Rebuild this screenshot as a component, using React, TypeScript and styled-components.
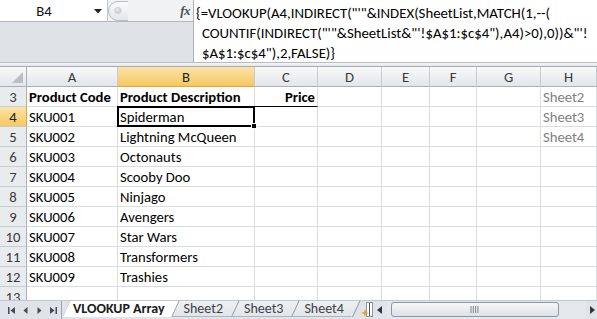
import styled, { createGlobalStyle, css } from "styled-components";

const GlobalStyle = createGlobalStyle`
  html, body {
    margin: 0;
    padding: 0;
  }
  body {
    background: #fff;
    font-family: Calibri, Carlito, "Liberation Sans", Arial, sans-serif;
    overflow: hidden;
  }
  * {
    box-sizing: border-box;
  }
`;

const COLS = ["A", "B", "C", "D", "E", "F", "G", "H"];
const COL_WIDTHS = [91, 137, 63, 64, 48, 47, 64, 56];

const FORMULA = [
  `{=VLOOKUP(A4,INDIRECT("'"&INDEX(SheetList,MATCH(1,--(`,
  `COUNTIF(INDIRECT("'"&SheetList&"'!$A$1:$c$4"),A4)>0),0))&"'!`,
  `$A$1:$c$4"),2,FALSE)}`,
];

type CellData = {
  text?: string;
  bold?: boolean;
  right?: boolean;
  muted?: boolean;
  underline?: boolean;
};

const products = [
  ["SKU001", "Spiderman"],
  ["SKU002", "Lightning McQueen"],
  ["SKU003", "Octonauts"],
  ["SKU004", "Scooby Doo"],
  ["SKU005", "Ninjago"],
  ["SKU006", "Avengers"],
  ["SKU007", "Star Wars"],
  ["SKU008", "Transformers"],
  ["SKU009", "Trashies"],
];

const sheetNames = ["Sheet2", "Sheet3", "Sheet4"];

const empty = (): CellData[] => COLS.map(() => ({}));

const rows: { num: number; cells: CellData[] }[] = [
  {
    num: 3,
    cells: [
      { text: "Product Code", bold: true },
      { text: "Product Description", bold: true },
      { text: "Price", bold: true, right: true, underline: true },
      {},
      {},
      {},
      {},
      { text: sheetNames[0], muted: true },
    ],
  },
  ...products.map(([sku, name], i) => {
    const cells = empty();
    cells[0] = { text: sku };
    cells[1] = { text: name };
    if (sheetNames[i + 1]) cells[7] = { text: sheetNames[i + 1], muted: true };
    return { num: i + 4, cells };
  }),
  { num: 13, cells: empty() },
];

const selected = { row: 4, col: 1 };

const tabs = ["VLOOKUP Array", "Sheet2", "Sheet3", "Sheet4"];

const NavIcon = ({ kind }: { kind: "first" | "prev" | "next" | "last" }) => (
  <svg width="9" height="9" viewBox="0 0 9 9">
    {kind === "first" && (
      <>
        <rect x="1" y="1" width="1.5" height="7" fill="#444d57" />
        <polygon points="8,1 8,8 3.5,4.5" fill="#444d57" />
      </>
    )}
    {kind === "prev" && <polygon points="6.5,1 6.5,8 2.5,4.5" fill="#444d57" />}
    {kind === "next" && <polygon points="2.5,1 2.5,8 6.5,4.5" fill="#444d57" />}
    {kind === "last" && (
      <>
        <polygon points="1,1 1,8 5.5,4.5" fill="#444d57" />
        <rect x="6.5" y="1" width="1.5" height="7" fill="#444d57" />
      </>
    )}
  </svg>
);

const App = () => {
  return (
    <>
      <GlobalStyle />
      <Window>
        <FormulaBar>
          <NameColumn>
            <NameBox>
              <NameText>B4</NameText>
              <DropArrow>
                <svg width="8" height="5" viewBox="0 0 8 5">
                  <polygon points="0,0 8,0 4,4.5" fill="#222" />
                </svg>
              </DropArrow>
            </NameBox>
          </NameColumn>
          <FxColumn>
            <FxStrip>
              <svg width="20" height="21" viewBox="0 0 20 21">
                <defs>
                  <linearGradient id="grip" x1="0" y1="0" x2="0" y2="1">
                    <stop offset="0" stopColor="#fbfbfc" />
                    <stop offset="1" stopColor="#e3e6ea" />
                  </linearGradient>
                </defs>
                <path
                  d="M20 1.5 H10 A9.5 9.5 0 0 0 10 20.5 H20"
                  fill="url(#grip)"
                  stroke="#b6bcc4"
                />
                <circle cx="10" cy="10.5" r="3.6" fill="#cdd2d8" />
                <circle cx="9.4" cy="9.8" r="1.8" fill="#e6e9ec" />
              </svg>
              <Fx>fx</Fx>
            </FxStrip>
          </FxColumn>
          <FormulaBox>
            {FORMULA.map((line, i) => (
              <FormulaLine key={i} $indent={i > 0}>
                {line}
              </FormulaLine>
            ))}
          </FormulaBox>
        </FormulaBar>
        <Divider />
        <Sheet>
          <Corner>
            <svg width="11" height="11" viewBox="0 0 11 11">
              <polygon points="11,0 11,11 0,11" fill="#b9bfc6" />
            </svg>
          </Corner>
          {COLS.map((c, i) => (
            <HeaderCell key={c} $selected={i === selected.col}>
              {c}
            </HeaderCell>
          ))}
          {rows.map((r) => (
            <RowGroup key={r.num}>
              <RowHeader $selected={r.num === selected.row}>{r.num}</RowHeader>
              {r.cells.map((cell, ci) => {
                const isSel = r.num === selected.row && ci === selected.col;
                return (
                  <Cell
                    key={ci}
                    $bold={cell.bold}
                    $right={cell.right}
                    $muted={cell.muted}
                    $underline={cell.underline}
                    $selected={isSel}
                  >
                    {cell.text}
                    {isSel && (
                      <>
                        <Selection />
                        <FillHandle />
                      </>
                    )}
                  </Cell>
                );
              })}
            </RowGroup>
          ))}
        </Sheet>
        <TabBar>
          <NavGroup>
            <NavButton>
              <NavIcon kind="first" />
            </NavButton>
            <NavButton>
              <NavIcon kind="prev" />
            </NavButton>
            <NavButton>
              <NavIcon kind="next" />
            </NavButton>
            <NavButton>
              <NavIcon kind="last" />
            </NavButton>
          </NavGroup>
          <Tabs>
            {tabs.map((t, i) => (
              <SheetTab key={t} $active={i === 0}>
                {t}
              </SheetTab>
            ))}
            <InsertTab>
              <svg width="8" height="8" viewBox="0 0 8 8">
                <polygon
                  points="4,0 5,3 8,4 5,5 4,8 3,5 0,4 3,3"
                  fill="#f0a12c"
                />
              </svg>
            </InsertTab>
          </Tabs>
          <SplitBox />
          <ScrollArrow>
            <svg width="5" height="8" viewBox="0 0 5 8">
              <polygon points="5,0 5,8 0,4" fill="#2f363d" />
            </svg>
          </ScrollArrow>
          <Track>
            <Thumb>
              <svg width="9" height="7" viewBox="0 0 9 7">
                {[0.5, 2.8, 5.1, 7.4].map((x) => (
                  <rect key={x} x={x} y="0" width="1" height="7" fill="#7d8690" />
                ))}
              </svg>
            </Thumb>
          </Track>
          <ScrollArrow>
            <svg width="5" height="8" viewBox="0 0 5 8">
              <polygon points="0,0 0,8 5,4" fill="#2f363d" />
            </svg>
          </ScrollArrow>
        </TabBar>
      </Window>
    </>
  );
};

export default App;

const Window = styled.div`
  width: 597px;
  height: 319px;
  display: flex;
  flex-direction: column;
  overflow: hidden;
`;

const FormulaBar = styled.div`
  display: grid;
  grid-template-columns: 108px 85px 1fr;
  height: 63px;
  flex: 0 0 63px;
  background: #dfe2e7;
  border-bottom: 1px solid #b7bdc5;
`;

const NameColumn = styled.div`
  display: flex;
  flex-direction: column;
`;

const NameBox = styled.div`
  height: 22px;
  display: flex;
  align-items: center;
  background: #fff;
  border-right: 1px solid #c3c8ce;
  border-bottom: 1px solid #b3b9c1;
  font-size: 14.67px;
  color: #111;
`;

const NameText = styled.span`
  flex: 1;
  text-align: center;
`;

const DropArrow = styled.span`
  width: 19px;
  display: flex;
  justify-content: center;
  padding-top: 1px;
`;

const FxColumn = styled.div`
  display: flex;
  flex-direction: column;
`;

const FxStrip = styled.div`
  height: 22px;
  display: flex;
  align-items: center;
  background: #f1f2f4;
  border-bottom: 1px solid #b3b9c1;
`;

const Fx = styled.span`
  margin-left: auto;
  padding-right: 3px;
  font-family: "Liberation Serif", "DejaVu Serif", serif;
  font-style: italic;
  font-weight: bold;
  font-size: 13px;
  color: #4a4f55;
  letter-spacing: -0.5px;
`;

const FormulaBox = styled.div`
  background: #fff;
  border-left: 1px solid #aab1b9;
  padding: 3px 0 0 2px;
  font-size: 14.8px;
  line-height: 20px;
  color: #000;
  overflow: hidden;
`;

const FormulaLine = styled.div<{ $indent?: boolean }>`
  white-space: pre;
  padding-left: ${({ $indent }) => ($indent ? "6px" : "0")};
`;

const Divider = styled.div`
  flex: 0 0 4px;
  background: linear-gradient(#f4f5f7, #e4e7eb);
  border-bottom: 1px solid #a6adb5;
`;

const Sheet = styled.div`
  flex: 1;
  min-height: 0;
  overflow: hidden;
  display: grid;
  grid-template-columns: 27px ${COL_WIDTHS.map((w) => `${w}px`).join(" ")};
  grid-auto-rows: 20px;
  align-content: start;
  font-size: 14.67px;
`;

const RowGroup = styled.div`
  display: contents;
`;

const Corner = styled.div`
  display: flex;
  align-items: flex-end;
  justify-content: flex-end;
  padding: 0 3px 3px 0;
  background: linear-gradient(#f8f9fa, #e3e6ea);
  border-right: 1px solid #a9b0b8;
  border-bottom: 1px solid #a9b0b8;
`;

const headerSelected = css`
  background: linear-gradient(#fbe4a6, #f6c862);
  color: #1f1f1f;
`;

const HeaderCell = styled.div<{ $selected?: boolean }>`
  background: linear-gradient(#f8f9fa, #e3e6ea);
  border-right: 1px solid #c6cbd1;
  border-bottom: 1px solid #a9b0b8;
  color: #3a3a3a;
  text-align: center;
  line-height: 20px;
  ${({ $selected }) =>
    $selected &&
    css`
      ${headerSelected}
      border-bottom-color: #e3a23c;
    `}
`;

const RowHeader = styled.div<{ $selected?: boolean }>`
  background: #e9ecef;
  border-right: 1px solid #a9b0b8;
  border-bottom: 1px solid #c8ccd1;
  color: #3a3a3a;
  text-align: center;
  line-height: 20px;
  ${({ $selected }) =>
    $selected &&
    css`
      ${headerSelected}
      border-right-color: #e3a23c;
    `}
`;

const Cell = styled.div<{
  $bold?: boolean;
  $right?: boolean;
  $muted?: boolean;
  $underline?: boolean;
  $selected?: boolean;
}>`
  border-right: 1px solid #dadcde;
  border-bottom: 1px solid ${({ $underline }) => ($underline ? "#000" : "#dadcde")};
  padding: 0 2px;
  line-height: 20px;
  white-space: nowrap;
  color: ${({ $muted }) => ($muted ? "#7f7f7f" : "#000")};
  text-align: ${({ $right }) => ($right ? "right" : "left")};
  font-weight: ${({ $bold }) => ($bold ? "bold" : "normal")};
  position: ${({ $selected }) => ($selected ? "relative" : "static")};
`;

const Selection = styled.span`
  position: absolute;
  inset: -1px;
  border: 2px solid #000;
  z-index: 2;
  pointer-events: none;
`;

const FillHandle = styled.span`
  position: absolute;
  right: -3px;
  bottom: -3px;
  width: 6px;
  height: 6px;
  background: #000;
  border: 1px solid #fff;
  z-index: 3;
`;

const TabBar = styled.div`
  flex: 0 0 19px;
  display: flex;
  align-items: flex-start;
  background: #e0e3e8;
  border-top: 1px solid #c2c7cd;
  overflow: hidden;
`;

const NavGroup = styled.div`
  flex: 0 0 62px;
  height: 18px;
  display: flex;
  align-items: center;
  padding-left: 4px;
  border-right: 1px solid #9aa2ab;
`;

const NavButton = styled.span`
  width: 14px;
  display: flex;
  justify-content: center;
`;

const Tabs = styled.div`
  display: flex;
  height: 17px;
`;

const SheetTab = styled.div<{ $active?: boolean }>`
  position: relative;
  z-index: ${({ $active }) => ($active ? 2 : 0)};
  isolation: isolate;
  height: 16px;
  line-height: 16px;
  padding: ${({ $active }) => ($active ? "0 6px 0 11px" : "0 8px 0 13px")};
  font-size: 14px;
  font-weight: ${({ $active }) => ($active ? "bold" : "normal")};
  color: ${({ $active }) => ($active ? "#1a1a1a" : "#3d4148")};
  white-space: nowrap;

  &::before {
    content: "";
    position: absolute;
    inset: 0;
    z-index: -1;
    transform: skewX(-25deg);
    transform-origin: bottom left;
    background: ${({ $active }) =>
      $active ? "#fff" : "linear-gradient(#eef0f2, #e2e5e9)"};
    border-left: 1px solid ${({ $active }) => ($active ? "#c9ced4" : "#939ba5")};
    border-bottom: 1px solid ${({ $active }) => ($active ? "#fff" : "#b0b6bd")};
  }
`;

const InsertTab = styled.div`
  position: relative;
  width: 14px;
  height: 16px;
  padding: 1px 0 0 9px;

  &::before {
    content: "";
    position: absolute;
    left: 0;
    top: 0;
    bottom: 0;
    width: 1px;
    background: #939ba5;
    transform: skewX(-25deg);
    transform-origin: bottom left;
  }
`;

const SplitBox = styled.div`
  flex: 0 0 7px;
  height: 15px;
  margin-top: 1px;
  border: 1px solid #8e97a1;
  background: linear-gradient(90deg, transparent 2px, #4a525b 2px, #4a525b 3px, transparent 3px),
    #fff;
`;

const ScrollArrow = styled.div`
  flex: 0 0 14px;
  height: 18px;
  display: flex;
  align-items: center;
  justify-content: center;
`;

const Track = styled.div`
  flex: 0 0 199px;
  height: 18px;
  padding: 1px 0 0 4px;
  background: #e4e7eb;
`;

const Thumb = styled.div`
  width: 168px;
  height: 15px;
  display: flex;
  align-items: center;
  justify-content: center;
  border: 1px solid #8f98a2;
  border-radius: 3px;
  background: linear-gradient(#f6f7f8, #dde1e6);
`;
